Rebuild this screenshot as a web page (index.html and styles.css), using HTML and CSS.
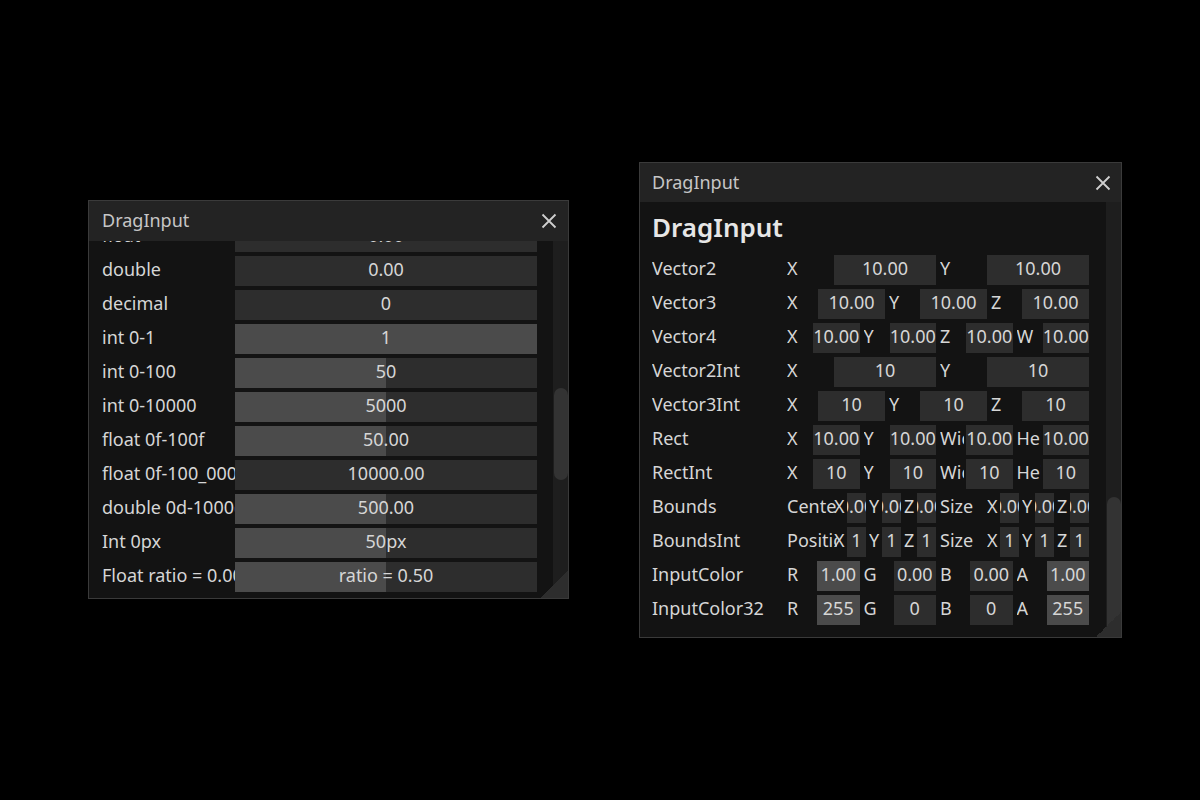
FILE: index.html
```html
<!DOCTYPE html>
<html>
<head>
<meta charset="utf-8">
<link rel="stylesheet" href="styles.css">
</head>
<body>
<div class="win win-left">
  <div class="titlebar">
    <span class="title">DragInput</span>
    <svg class="close" viewBox="0 0 16 16"><path d="M1.5 1.5 L14.5 14.5 M14.5 1.5 L1.5 14.5" stroke="#cfcfcf" stroke-width="1.8" fill="none"/></svg>
  </div>
  <div class="body">
    <div class="scroll scroll-left">
      <div class="rows rows-left">
        <div class="row"><div class="lbl">float</div><div class="fld"><span class="val">0.00</span></div></div>
        <div class="row"><div class="lbl">double</div><div class="fld"><span class="val">0.00</span></div></div>
        <div class="row"><div class="lbl">decimal</div><div class="fld"><span class="val">0</span></div></div>
        <div class="row"><div class="lbl">int 0-1</div><div class="fld bar" style="--p:100%"><span class="val">1</span></div></div>
        <div class="row"><div class="lbl">int 0-100</div><div class="fld bar" style="--p:50%"><span class="val">50</span></div></div>
        <div class="row"><div class="lbl">int 0-10000</div><div class="fld bar" style="--p:50%"><span class="val">5000</span></div></div>
        <div class="row"><div class="lbl">float 0f-100f</div><div class="fld bar" style="--p:50%"><span class="val">50.00</span></div></div>
        <div class="row"><div class="lbl">float 0f-100_000f</div><div class="fld"><span class="val">10000.00</span></div></div>
        <div class="row"><div class="lbl">double 0d-1000d</div><div class="fld bar" style="--p:50%"><span class="val">500.00</span></div></div>
        <div class="row"><div class="lbl">Int 0px</div><div class="fld bar" style="--p:50%"><span class="val">50px</span></div></div>
        <div class="row"><div class="lbl">Float ratio = 0.00</div><div class="fld bar" style="--p:50%"><span class="val">ratio = 0.50</span></div></div>
      </div>
    </div>
    <div class="track"><div class="thumb thumb-left"></div></div>
  </div>
  <div class="grip grip-left"></div>
</div>

<div class="win win-right">
  <div class="titlebar titlebar-right">
    <span class="title">DragInput</span>
    <svg class="close" viewBox="0 0 16 16"><path d="M1.5 1.5 L14.5 14.5 M14.5 1.5 L1.5 14.5" stroke="#cfcfcf" stroke-width="1.8" fill="none"/></svg>
  </div>
  <div class="body">
    <div class="scroll scroll-right">
      <div class="heading">DragInput</div>
      <div class="rows">
        <div class="row"><div class="rlbl">Vector2</div>
          <div class="comps">
            <div class="comp"><div class="cl w47">X</div><div class="cf">10.00</div></div>
            <div class="comp"><div class="cl w47">Y</div><div class="cf">10.00</div></div>
          </div></div>
        <div class="row"><div class="rlbl">Vector3</div>
          <div class="comps">
            <div class="comp"><div class="cl w31">X</div><div class="cf">10.00</div></div>
            <div class="comp"><div class="cl w31">Y</div><div class="cf">10.00</div></div>
            <div class="comp"><div class="cl w31">Z</div><div class="cf">10.00</div></div>
          </div></div>
        <div class="row"><div class="rlbl">Vector4</div>
          <div class="comps">
            <div class="comp"><div class="cl w26">X</div><div class="cf">10.00</div></div>
            <div class="comp"><div class="cl w26">Y</div><div class="cf">10.00</div></div>
            <div class="comp"><div class="cl w26">Z</div><div class="cf">10.00</div></div>
            <div class="comp"><div class="cl w26">W</div><div class="cf">10.00</div></div>
          </div></div>
        <div class="row"><div class="rlbl">Vector2Int</div>
          <div class="comps">
            <div class="comp"><div class="cl w47">X</div><div class="cf">10</div></div>
            <div class="comp"><div class="cl w47">Y</div><div class="cf">10</div></div>
          </div></div>
        <div class="row"><div class="rlbl">Vector3Int</div>
          <div class="comps">
            <div class="comp"><div class="cl w31">X</div><div class="cf">10</div></div>
            <div class="comp"><div class="cl w31">Y</div><div class="cf">10</div></div>
            <div class="comp"><div class="cl w31">Z</div><div class="cf">10</div></div>
          </div></div>
        <div class="row"><div class="rlbl">Rect</div>
          <div class="comps">
            <div class="comp"><div class="cl w26">X</div><div class="cf">10.00</div></div>
            <div class="comp"><div class="cl w26">Y</div><div class="cf">10.00</div></div>
            <div class="comp"><div class="cl w24">Width</div><div class="cf">10.00</div></div>
            <div class="comp"><div class="cl w24">Height</div><div class="cf">10.00</div></div>
          </div></div>
        <div class="row"><div class="rlbl">RectInt</div>
          <div class="comps">
            <div class="comp"><div class="cl w26">X</div><div class="cf">10</div></div>
            <div class="comp"><div class="cl w26">Y</div><div class="cf">10</div></div>
            <div class="comp"><div class="cl w24">Width</div><div class="cf">10</div></div>
            <div class="comp"><div class="cl w24">Height</div><div class="cf">10</div></div>
          </div></div>
        <div class="row"><div class="rlbl">Bounds</div>
          <div class="comps">
            <div class="comp"><div class="cl w47o">Center</div>
              <div class="sub">
                <div class="comp"><div class="cl w13">X</div><div class="cf"><span class="val">0.00</span></div></div>
                <div class="comp"><div class="cl w13">Y</div><div class="cf"><span class="val">0.00</span></div></div>
                <div class="comp"><div class="cl w13">Z</div><div class="cf"><span class="val">0.00</span></div></div>
              </div></div>
            <div class="comp"><div class="cl w47o">Size</div>
              <div class="sub">
                <div class="comp"><div class="cl w13">X</div><div class="cf"><span class="val">0.00</span></div></div>
                <div class="comp"><div class="cl w13">Y</div><div class="cf"><span class="val">0.00</span></div></div>
                <div class="comp"><div class="cl w13">Z</div><div class="cf"><span class="val">0.00</span></div></div>
              </div></div>
          </div></div>
        <div class="row"><div class="rlbl">BoundsInt</div>
          <div class="comps">
            <div class="comp"><div class="cl w47o">Position</div>
              <div class="sub">
                <div class="comp"><div class="cl w13">X</div><div class="cf">1</div></div>
                <div class="comp"><div class="cl w13">Y</div><div class="cf">1</div></div>
                <div class="comp"><div class="cl w13">Z</div><div class="cf">1</div></div>
              </div></div>
            <div class="comp"><div class="cl w47o">Size</div>
              <div class="sub">
                <div class="comp"><div class="cl w13">X</div><div class="cf">1</div></div>
                <div class="comp"><div class="cl w13">Y</div><div class="cf">1</div></div>
                <div class="comp"><div class="cl w13">Z</div><div class="cf">1</div></div>
              </div></div>
          </div></div>
        <div class="row"><div class="rlbl">InputColor</div>
          <div class="comps">
            <div class="comp"><div class="cl w30">R</div><div class="cf full">1.00</div></div>
            <div class="comp"><div class="cl w30">G</div><div class="cf">0.00</div></div>
            <div class="comp"><div class="cl w30">B</div><div class="cf">0.00</div></div>
            <div class="comp"><div class="cl w30">A</div><div class="cf full">1.00</div></div>
          </div></div>
        <div class="row"><div class="rlbl">InputColor32</div>
          <div class="comps">
            <div class="comp"><div class="cl w30">R</div><div class="cf full">255</div></div>
            <div class="comp"><div class="cl w30">G</div><div class="cf">0</div></div>
            <div class="comp"><div class="cl w30">B</div><div class="cf">0</div></div>
            <div class="comp"><div class="cl w30">A</div><div class="cf full">255</div></div>
          </div></div>
      </div>
    </div>
    <div class="track"><div class="thumb thumb-right"></div></div>
  </div>
  <div class="grip grip-right"></div>
</div>
</body>
</html>
```

FILE: styles.css
```css
* { box-sizing: border-box; }

body {
  margin: 0;
  width: 1200px;
  height: 800px;
  overflow: hidden;
  position: relative;
  background: #000;
  font-family: "Noto Sans", "DejaVu Sans", sans-serif;
  font-size: 18px;
  color: #d6d6d6;
}

.win {
  position: absolute;
  display: flex;
  flex-direction: column;
  overflow: hidden;
  border: 1px solid #3a3a3a;
  background: #1e1e1e;
}

.win-left { left: 88px; top: 200px; width: 481px; height: 399px; }
.win-right { left: 639px; top: 162px; width: 483px; height: 476px; }

.titlebar {
  flex: none;
  height: 40px;
  display: flex;
  align-items: center;
  justify-content: space-between;
  padding: 0 11px 2px 13px;
  background: #232323;
}
.titlebar-right { height: 39px; padding: 0 10px 2px 12px; }

.title { color: #c6c6c6; font-size: 18px; line-height: 1; }

.close { width: 16px; height: 16px; display: block; margin-top: 2px; }

.body { flex: 1; display: flex; min-height: 0; }

.scroll {
  flex: 1;
  min-width: 0;
  overflow: hidden;
  background: #131313;
}
.scroll-left { padding: 0 16px 0 13px; }
.scroll-right { padding: 8px 18px 0 12px; }

.track { flex: none; width: 15px; background: #1e1e1e; }
.thumb { width: 14px; margin-left: 1px; border-radius: 7px; background: #333333; }
.thumb-left { margin-top: 147px; height: 92px; }
.thumb-right { margin-top: 295px; height: 160px; }

.rows { display: flex; flex-direction: column; gap: 4px; }
.rows-left { margin-top: -19px; }

.row { display: flex; align-items: center; height: 30px; flex: none; }

.lbl, .rlbl, .cl {
  flex: none;
  overflow: hidden;
  white-space: nowrap;
  height: 30px;
  line-height: 26px;
  padding-bottom: 4px;
}
.lbl { width: 133px; }
.rlbl { width: 135px; }

.fld, .cf {
  flex: 1;
  min-width: 0;
  height: 30px;
  padding-bottom: 4px;
  display: flex;
  align-items: center;
  justify-content: center;
  overflow: hidden;
  white-space: nowrap;
  background: #2d2d2d;
}
.fld.bar { background: linear-gradient(to right, #4b4b4b var(--p), #2d2d2d var(--p)); }
.cf.full { background: #4b4b4b; }
.val { white-space: nowrap; flex: none; }

.heading {
  height: 36px;
  line-height: 34px;
  margin-bottom: 9px;
  font-size: 26px;
  font-weight: 600;
  color: #e6e6e6;
}

.comps { width: 302px; flex: none; display: flex; gap: 4px; height: 30px; }
.comp { flex: 1 1 0; min-width: 0; display: flex; height: 30px; align-items: center; }
.sub { flex: 1; min-width: 0; display: flex; gap: 3px; height: 30px; }

.w47 { width: 47px; }
.w47o { width: 50px; margin-right: -3px; }
.w31 { width: 31px; }
.w30 { width: 30px; }
.w26 { width: 26px; }
.w24 { width: 24px; margin-right: 2px; }
.w13 { width: 13px; }

.grip {
  position: absolute;
  right: 0;
  bottom: 0;
  background: linear-gradient(135deg, transparent 50%, #2d2d2d 50%);
}
.grip-left { width: 28px; height: 28px; }
.grip-right { width: 25px; height: 25px; }
```
